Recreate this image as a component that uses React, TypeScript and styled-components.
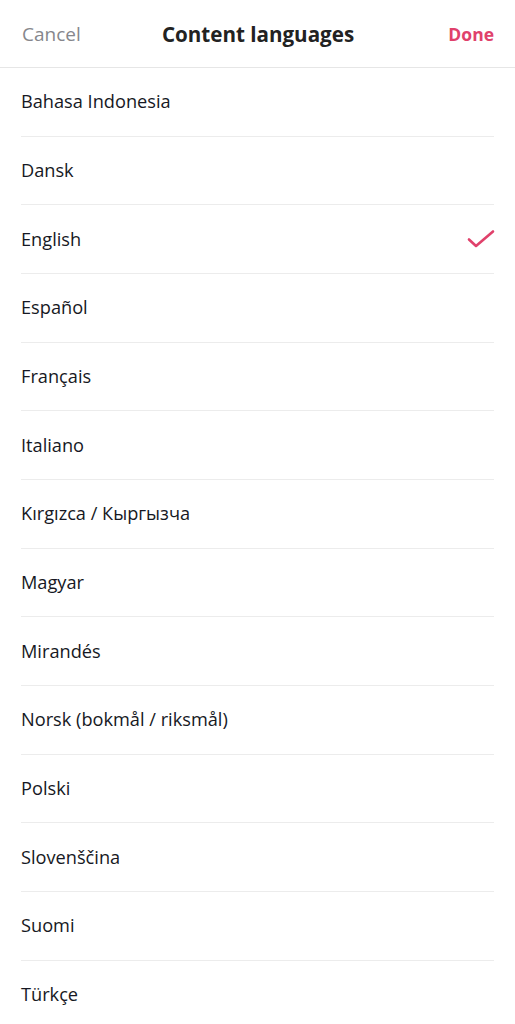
import React from "react";
import styled, { createGlobalStyle } from "styled-components";

const Global = createGlobalStyle`
  html, body { margin: 0; padding: 0; background: #fff; }
  body { font-family: "Open Sans", "Lato", sans-serif; color: #161823; }
`;

const Page = styled.div`
  width: 515px;
  display: flex;
  flex-direction: column;
`;

const Header = styled.header`
  height: 67px;
  border-bottom: 1px solid #e6e6e6;
  display: grid;
  grid-template-columns: 1fr auto 1fr;
  align-items: center;
  padding: 0 21px 0 22px;
`;

const HeaderAction = styled.span<{ $accent?: boolean; $end?: boolean }>`
  font-size: ${(p) => (p.$accent ? "17.5px" : "19px")};
  font-weight: ${(p) => (p.$accent ? 700 : 400)};
  color: ${(p) => (p.$accent ? "#e0416b" : "#86878c")};
  justify-self: ${(p) => (p.$end ? "end" : "start")};
`;

const Title = styled.h1`
  margin: 0;
  font-size: 20.6px;
  font-weight: 700;
  color: #222;
`;

const List = styled.ul`
  list-style: none;
  margin: 0;
  padding: 0 21px;
`;

const Row = styled.li`
  height: 68.67px;
  box-sizing: border-box;
  border-bottom: 1px solid #ececec;
  display: flex;
  align-items: center;
  justify-content: space-between;
  font-size: 18.2px;
  color: #161823;
  padding-bottom: 1px;
`;

const Check = styled.svg`
  width: 28px;
  height: 20px;
  margin-right: -1px;
`;

const languages = [
  "Bahasa Indonesia",
  "Dansk",
  "English",
  "Español",
  "Français",
  "Italiano",
  "Kırgızca / Кыргызча",
  "Magyar",
  "Mirandés",
  "Norsk (bokmål / riksmål)",
  "Polski",
  "Slovenščina",
  "Suomi",
  "Türkçe",
];

export default function App() {
  return (
    <Page>
      <Global />
      <Header>
        <HeaderAction>Cancel</HeaderAction>
        <Title>Content languages</Title>
        <HeaderAction $accent $end>
          Done
        </HeaderAction>
      </Header>
      <List>
        {languages.map((l) => (
          <Row key={l}>
            <span>{l}</span>
            {l === "English" && (
              <Check viewBox="0 0 28 20">
                <path
                  d="M2 10.5 L9 17 L26 2.5"
                  fill="none"
                  stroke="#e0416b"
                  strokeWidth="2.6"
                  strokeLinecap="round"
                  strokeLinejoin="round"
                />
              </Check>
            )}
          </Row>
        ))}
      </List>
    </Page>
  );
}
